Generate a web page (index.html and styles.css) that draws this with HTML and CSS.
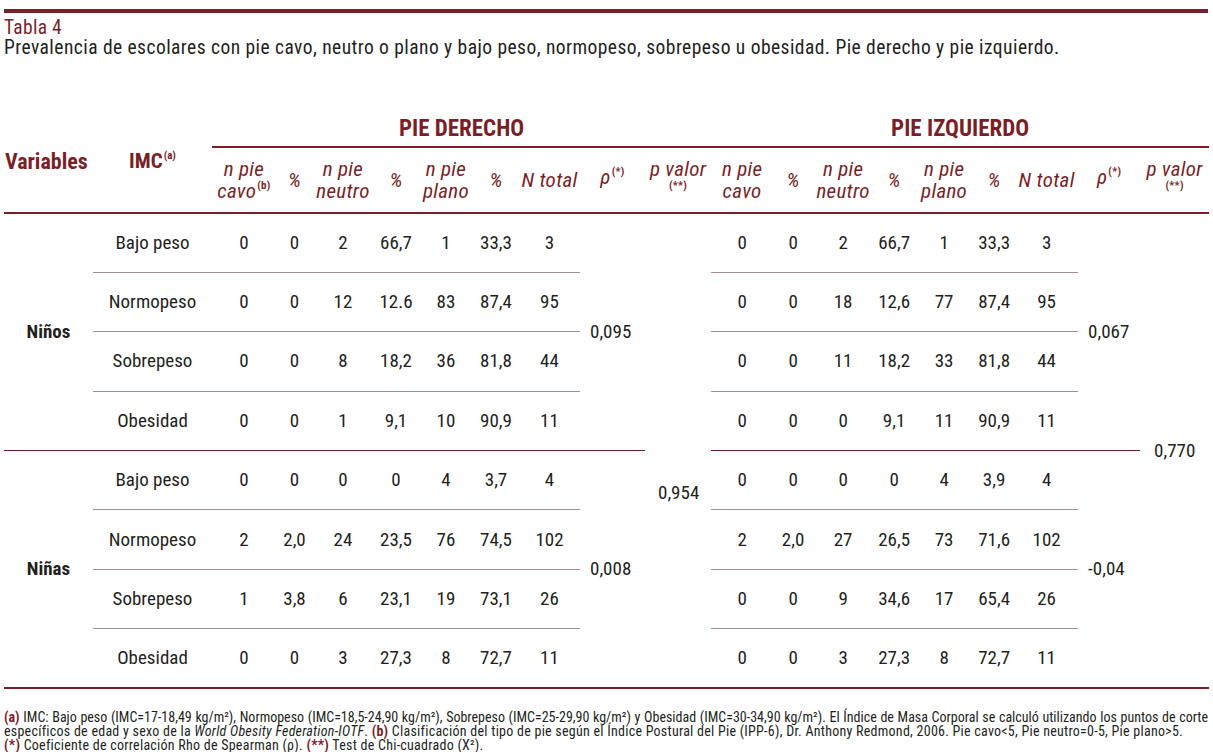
FILE: index.html
```html
<!DOCTYPE html>
<html lang="es">
<head>
<meta charset="utf-8">
<title>Tabla 4</title>
<link rel="stylesheet" href="styles.css">
</head>
<body>
<div class="topline"></div>
<div class="title">Tabla 4</div>
<div class="caption">Prevalencia de escolares con pie cavo, neutro o plano y bajo peso, normopeso, sobrepeso u obesidad. Pie derecho y pie izquierdo.</div>

<table class="data">
  <colgroup>
    <col style="width:89px"><col style="width:119px">
    <col style="width:64px"><col style="width:37px"><col style="width:60px"><col style="width:46px"><col style="width:54px"><col style="width:46px"><col style="width:61px">
    <col style="width:65px"><col style="width:66px">
    <col style="width:62px"><col style="width:40px"><col style="width:60px"><col style="width:42px"><col style="width:58px"><col style="width:42px"><col style="width:63px">
    <col style="width:62px"><col style="width:69px">
  </colgroup>
  <thead>
    <tr class="hrow1">
      <th rowspan="2" class="h-var">Variables</th>
      <th rowspan="2" class="h-imc">IMC<sup>(a)</sup></th>
      <th colspan="9" class="h-grp">PIE DERECHO</th>
      <th colspan="9" class="h-grp">PIE IZQUIERDO</th>
    </tr>
    <tr class="hrow2">
      <th class="h-sub">n pie<br>cavo<sup>(b)</sup></th>
      <th class="h-sub">%</th>
      <th class="h-sub">n pie<br>neutro</th>
      <th class="h-sub">%</th>
      <th class="h-sub">n pie<br>plano</th>
      <th class="h-sub">%</th>
      <th class="h-sub">N total</th>
      <th class="h-sub h-rho">ρ<sup>(*)</sup></th>
      <th class="h-sub h-pv">p valor<br><span class="pv-note">(**)</span></th>
      <th class="h-sub">n pie<br>cavo</th>
      <th class="h-sub">%</th>
      <th class="h-sub">n pie<br>neutro</th>
      <th class="h-sub">%</th>
      <th class="h-sub">n pie<br>plano</th>
      <th class="h-sub">%</th>
      <th class="h-sub">N total</th>
      <th class="h-sub h-rho">ρ<sup>(*)</sup></th>
      <th class="h-sub h-pv">p valor<br><span class="pv-note">(**)</span></th>
    </tr>
  </thead>
  <tbody>
    <tr>
      <td rowspan="4" class="grp-name dk">Niños</td>
      <td class="lt">Bajo peso</td>
      <td class="lt">0</td><td class="lt">0</td><td class="lt">2</td><td class="lt">66,7</td><td class="lt">1</td><td class="lt">33,3</td><td class="lt">3</td>
      <td rowspan="4" class="rho dk">0,095</td>
      <td rowspan="8" class="pv pv-d">0,954</td>
      <td class="lt">0</td><td class="lt">0</td><td class="lt">2</td><td class="lt">66,7</td><td class="lt">1</td><td class="lt">33,3</td><td class="lt">3</td>
      <td rowspan="4" class="rho dk">0,067</td>
      <td rowspan="8" class="pv">0,770</td>
    </tr>
    <tr>
      <td class="lt">Normopeso</td>
      <td class="lt">0</td><td class="lt">0</td><td class="lt">12</td><td class="lt">12.6</td><td class="lt">83</td><td class="lt">87,4</td><td class="lt">95</td>
      <td class="lt">0</td><td class="lt">0</td><td class="lt">18</td><td class="lt">12,6</td><td class="lt">77</td><td class="lt">87,4</td><td class="lt">95</td>
    </tr>
    <tr>
      <td class="lt">Sobrepeso</td>
      <td class="lt">0</td><td class="lt">0</td><td class="lt">8</td><td class="lt">18,2</td><td class="lt">36</td><td class="lt">81,8</td><td class="lt">44</td>
      <td class="lt">0</td><td class="lt">0</td><td class="lt">11</td><td class="lt">18,2</td><td class="lt">33</td><td class="lt">81,8</td><td class="lt">44</td>
    </tr>
    <tr>
      <td class="dk">Obesidad</td>
      <td class="dk">0</td><td class="dk">0</td><td class="dk">1</td><td class="dk">9,1</td><td class="dk">10</td><td class="dk">90,9</td><td class="dk">11</td>
      <td class="dk">0</td><td class="dk">0</td><td class="dk">0</td><td class="dk">9,1</td><td class="dk">11</td><td class="dk">90,9</td><td class="dk">11</td>
    </tr>
    <tr>
      <td rowspan="4" class="grp-name">Niñas</td>
      <td class="lt">Bajo peso</td>
      <td class="lt">0</td><td class="lt">0</td><td class="lt">0</td><td class="lt">0</td><td class="lt">4</td><td class="lt">3,7</td><td class="lt">4</td>
      <td rowspan="4" class="rho">0,008</td>
      <td class="lt">0</td><td class="lt">0</td><td class="lt">0</td><td class="lt">0</td><td class="lt">4</td><td class="lt">3,9</td><td class="lt">4</td>
      <td rowspan="4" class="rho">-0,04</td>
    </tr>
    <tr>
      <td class="lt">Normopeso</td>
      <td class="lt">2</td><td class="lt">2,0</td><td class="lt">24</td><td class="lt">23,5</td><td class="lt">76</td><td class="lt">74,5</td><td class="lt">102</td>
      <td class="lt">2</td><td class="lt">2,0</td><td class="lt">27</td><td class="lt">26,5</td><td class="lt">73</td><td class="lt">71,6</td><td class="lt">102</td>
    </tr>
    <tr>
      <td class="lt">Sobrepeso</td>
      <td class="lt">1</td><td class="lt">3,8</td><td class="lt">6</td><td class="lt">23,1</td><td class="lt">19</td><td class="lt">73,1</td><td class="lt">26</td>
      <td class="lt">0</td><td class="lt">0</td><td class="lt">9</td><td class="lt">34,6</td><td class="lt">17</td><td class="lt">65,4</td><td class="lt">26</td>
    </tr>
    <tr>
      <td>Obesidad</td>
      <td>0</td><td>0</td><td>3</td><td>27,3</td><td>8</td><td>72,7</td><td>11</td>
      <td>0</td><td>0</td><td>3</td><td>27,3</td><td>8</td><td>72,7</td><td>11</td>
    </tr>
  </tbody>
</table>

<div class="notes">
  <div class="note-line justify"><b>(a)</b> IMC: Bajo peso (IMC=17-18,49 kg/m²), Normopeso (IMC=18,5-24,90 kg/m²), Sobrepeso (IMC=25-29,90 kg/m²) y Obesidad (IMC=30-34,90 kg/m²). El Índice de Masa Corporal se calculó utilizando los puntos de corte</div>
  <div class="note-line spaced">específicos de edad y sexo de la <i>World Obesity Federation-IOTF</i>. <b>(b)</b> Clasificación del tipo de pie según el Índice Postural del Pie (IPP-6), Dr. Anthony Redmond, 2006. Pie cavo&lt;5, Pie neutro=0-5, Pie plano&gt;5.</div>
  <div class="note-line spaced"><b>(*)</b> Coeficiente de correlación Rho de Spearman (ρ). <b>(**)</b> Test de Chi-cuadrado (X²).</div>
</div>
</body>
</html>
```

FILE: styles.css
```css
html, body {
  margin: 0;
  background: #ffffff;
}

body {
  padding: 9px 5px 0 4px;
  font-family: "Roboto Condensed", Roboto, "Liberation Sans", Arial, sans-serif;
  color: #231f20;
}

.topline {
  height: 4px;
  background: #7a1f27;
}

.title {
  margin-top: 5px;
  color: #7a1f27;
  font-size: 19.5px;
  line-height: 20px;
  letter-spacing: 0.3px;
}

.caption {
  font-size: 19.5px;
  line-height: 20px;
  letter-spacing: 0.45px;
}

.data {
  margin-top: 52px;
  width: 1205px;
  border-collapse: collapse;
  table-layout: fixed;
  border-bottom: 2px solid #7a1f27;
}

.data th,
.data td {
  padding: 0;
  text-align: center;
  vertical-align: middle;
}

.data th {
  color: #7a1f27;
}

.data sup {
  font-size: 11px;
  font-weight: bold;
  font-style: normal;
  line-height: 0;
  vertical-align: 9px;
  margin-left: 1px;
}

.hrow1 {
  height: 37px;
}

.hrow2 {
  height: 66px;
}

.h-var {
  text-align: left !important;
  padding-left: 1px !important;
  font-size: 22px;
  font-weight: bold;
  border-bottom: 2px solid #7a1f27;
}

.h-imc {
  font-size: 21px;
  font-weight: bold;
  border-bottom: 2px solid #7a1f27;
}

.h-grp {
  font-size: 23px;
  font-weight: bold;
  border-bottom: 2px solid #7a1f27;
}

.h-sub {
  font-size: 21px;
  line-height: 22px;
  letter-spacing: 0.3px;
  font-style: italic;
  font-weight: normal;
  border-bottom: 2px solid #7a1f27;
}

.h-rho {
  padding-bottom: 6px !important;
}

.pv-note {
  font-size: 11px;
  font-weight: bold;
  font-style: normal;
  line-height: 12px;
  vertical-align: top;
}

.data tbody tr {
  height: 59.4px;
}

.data td {
  font-size: 19px;
  line-height: 22px;
}

.grp-name {
  font-weight: bold;
}

.rho {
  text-align: left !important;
  padding-left: 10px !important;
}

.pv {
  text-align: left !important;
  padding-left: 14px !important;
}

.pv-d {
  padding-top: 84px !important;
  padding-left: 13px !important;
}

.lt {
  border-bottom: 1px solid #a78c90;
}

.dk {
  border-bottom: 1px solid #6e1c23;
}

.notes {
  margin-top: 21px;
  font-size: 14px;
  line-height: 14px;
}

.notes b {
  color: #7a1f27;
}

.note-line.justify {
  text-align: justify;
  text-align-last: justify;
}

.note-line.spaced {
  letter-spacing: 0.25px;
}
```
